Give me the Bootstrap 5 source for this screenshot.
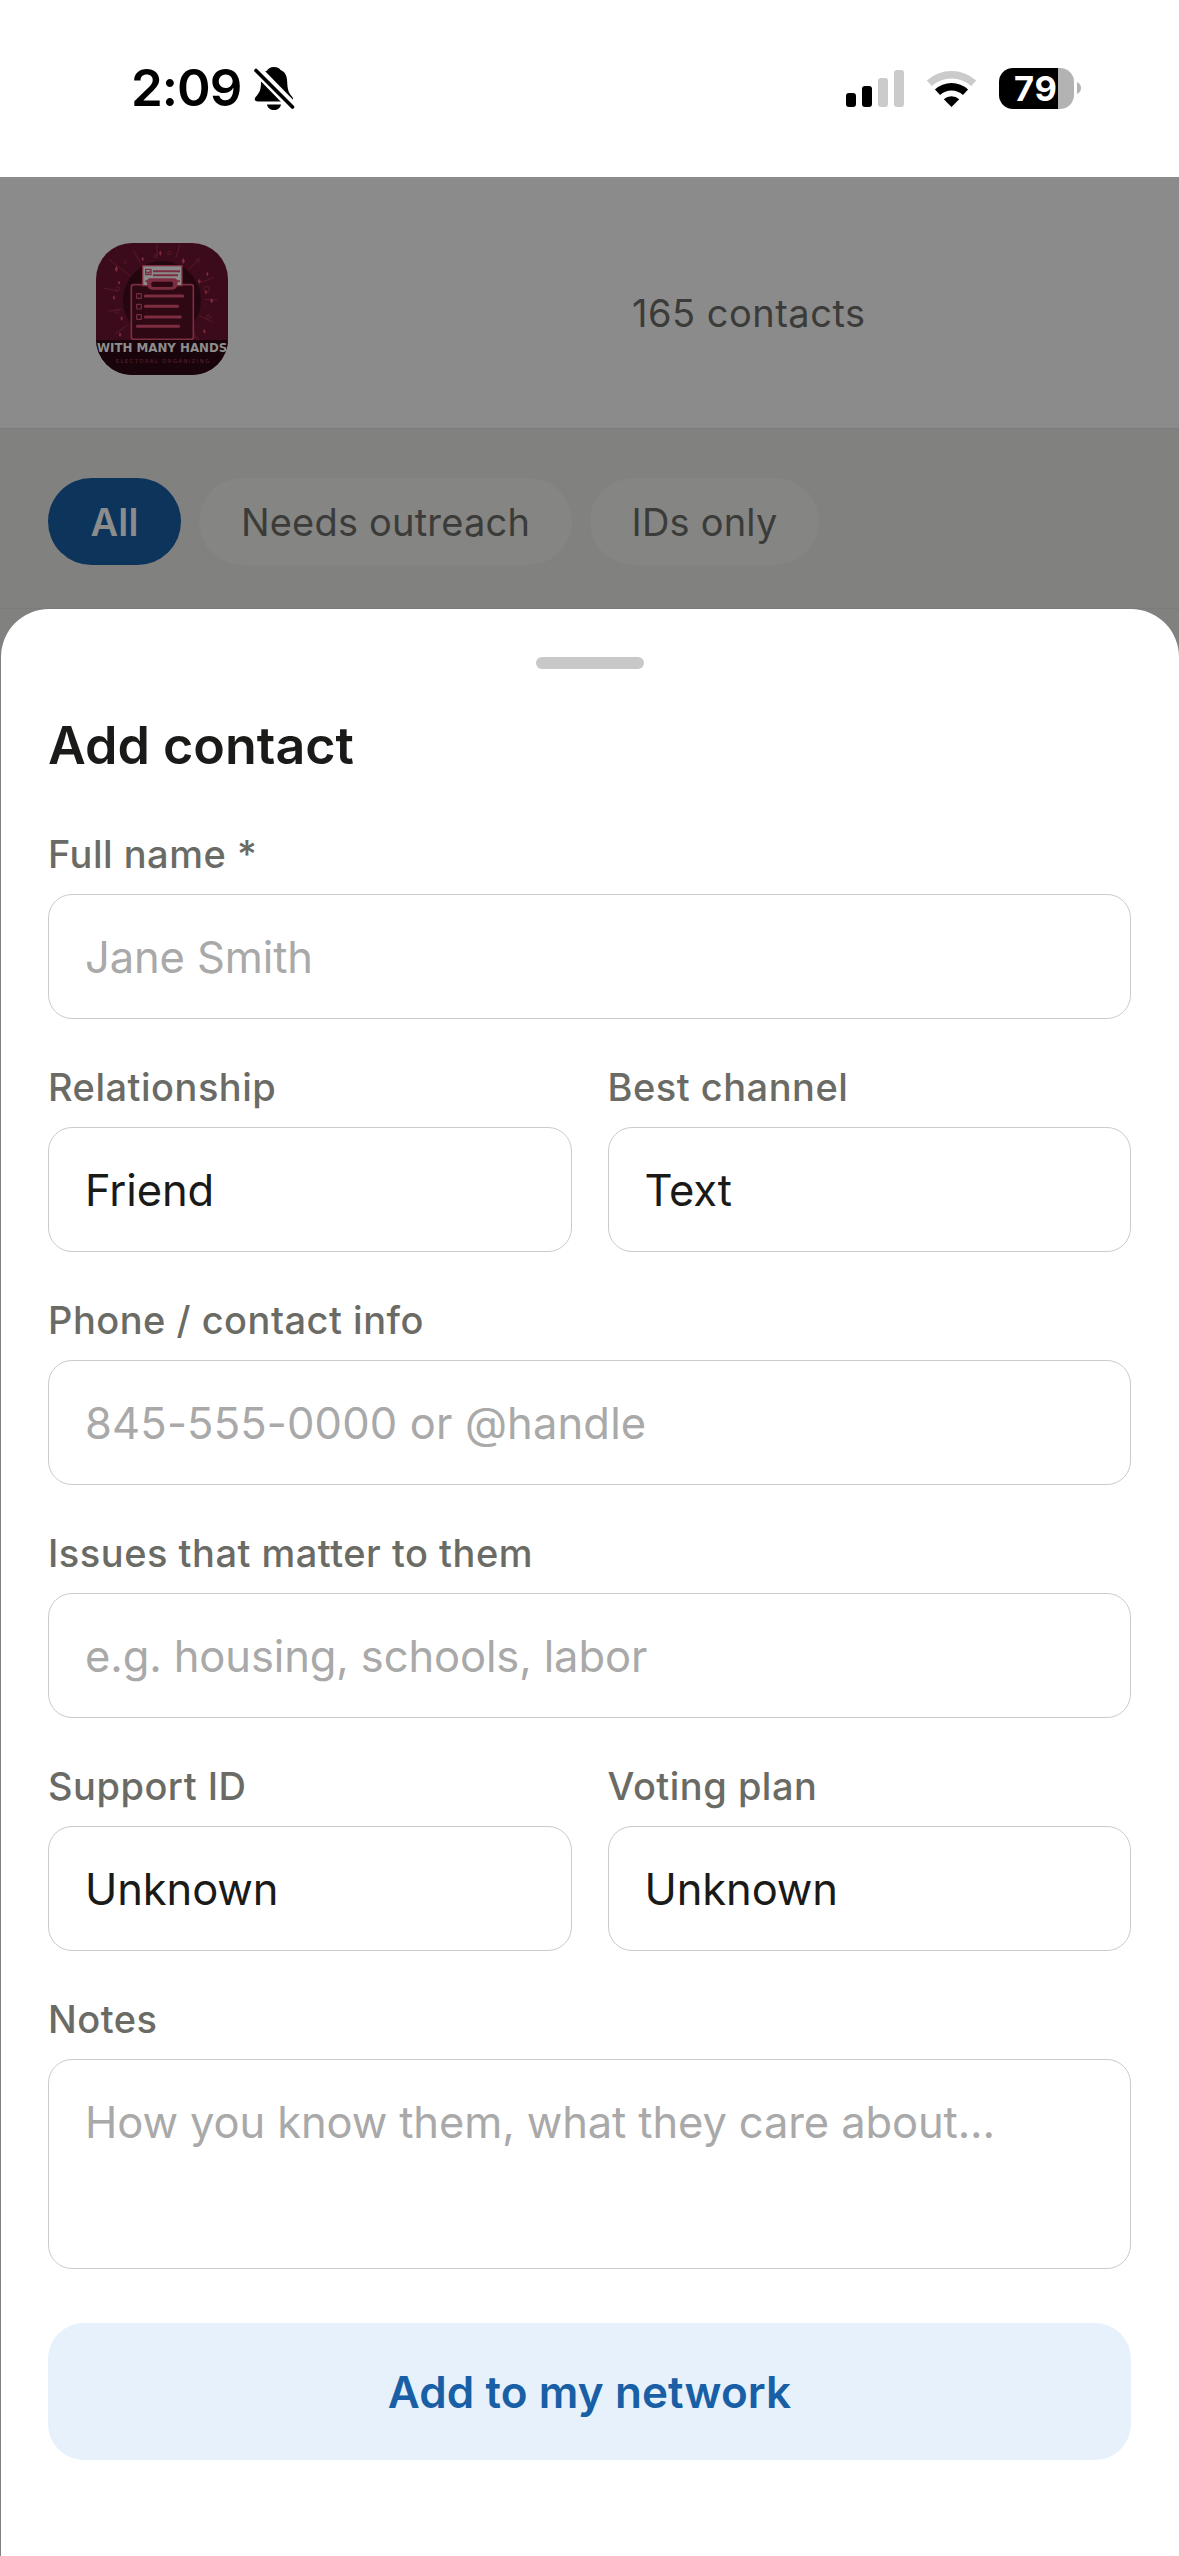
<!DOCTYPE html>
<html lang="en">
<head>
<meta charset="utf-8">
<meta name="viewport" content="width=device-width, initial-scale=1">
<title>Add contact</title>
<link href="https://cdn.jsdelivr.net/npm/bootstrap@5.3.0/dist/css/bootstrap.min.css" rel="stylesheet">
<style>
  body { font-family: Inter, "Liberation Sans", sans-serif; background: #81817f; color: #1a1a18; height: 2556px; overflow: hidden; }
  .status-bar { height: 177px; padding: 0 98px 0 131px; }
  .clock { font-size: 51px; font-weight: 600; line-height: 62px; margin-bottom: 2px; letter-spacing: -1px; width: 123px; }
  .status-icons { height: 44px; }
  .app-header { height: 252px; background: #8b8b8b; border-bottom: 1px solid #7b7b7b; padding: 13px 0 0 96px; color: #3b3b39; }
  .logo-img { width: 132px; height: 132px; }
  .contact-count { margin: 8px 0 0 404px; font-size: 38px; line-height: 48px; letter-spacing: .5px; }
  .filters { height: 180px; padding: 49px 48px 0; gap: 18px; border-bottom: 1px solid #7b7b7b; }
  .filter-pill { height: 87px; border-radius: 44px; background: #858583; color: #3b3b39; font-size: 38px; line-height: 48px; padding: 0; border: 0; letter-spacing: .2px; }
  .filter-pill.is-active { background: #0d355c; color: #8c8c8c; font-weight: 600; }
  .pill-a { width: 133px; } .pill-b { width: 373px; } .pill-c { width: 229px; }
  .sheet { margin-left: 1px; border-radius: 48px 48px 0 0; padding: 48px 48px 0 47px; }
  .grabber { width: 108px; height: 12px; border-radius: 6px; background: #c8c8c8; }
  .sheet-title { font-size: 52px; font-weight: 600; line-height: 64px; margin: 45px 0 52px; }
  .field { margin-bottom: 44px; }
  .field .form-label { display: block; font-size: 38px; font-weight: 500; line-height: 48px; margin: 0 0 16px; color: #6b6b66; letter-spacing: .5px; }
  .field .form-control { height: 125px; border: 1px solid #cbcbcb; border-radius: 24px; padding: 0 36px; font-size: 43.5px; line-height: 54px; letter-spacing: -.12px; color: #1a1a18; background: #fff; }
  .field .form-control::placeholder { color: #a9a9a9; opacity: 1; }
  .field .form-control[type=tel] { letter-spacing: .15px; }
  .field textarea.form-control { height: 210px; padding-top: 35px; resize: none; }
  .pair { gap: 36px; }
  .submit-btn { height: 137px; margin-top: 54px; border: 0; border-radius: 36px; background: #e6f1fb; color: #185fa5; font-size: 44px; font-weight: 600; letter-spacing: .1px; }
</style>
</head>
<body class="d-flex flex-column">
  <header class="status-bar bg-white d-flex align-items-center flex-shrink-0">
    <span class="clock text-black">2:09</span>
    <svg width="42" height="46" viewBox="0 0 42 46">
      <path d="M20 1c-4 0-6 2-6.800 3.500C7.500 7 7 12 7 16c0 7-1 10-4.500 14C-.5 33 .5 35.500 4 35.500h31c4.500 0 5-3 2.500-5.500C34 26 33.500 22 33.200 16 33 9 31 6 26.500 4 25.500 2 23 1 20 1zM13 38.500h14c-.5 3.500-3.500 5.500-7 5.500s-6.500-2-7-5.500z"/>
      <path d="M0 1 41 43" stroke="#fff" stroke-width="10"/>
      <path d="M2 4.500 38.500 41" stroke="#000" stroke-width="3.600" stroke-linecap="round"/>
    </svg>
    <div class="status-icons d-flex align-items-center ms-auto">
      <svg width="236" height="44" viewBox="845 66 236 44">
        <g><rect x="846" y="92" width="10" height="14" rx="3"/><rect x="862" y="85" width="10" height="21" rx="3"/></g>
        <g fill="#cbcbcb"><rect x="878" y="77" width="10" height="29" rx="3"/><rect x="894" y="69" width="10" height="37" rx="3"/></g>
        <g fill="none">
          <path d="M929.300 82.300a33 33 0 0 1 44.400 0" stroke="#cbcbcb" stroke-width="7.500"/>
          <path d="M937.500 91.300a20.500 20.500 0 0 1 28 0" stroke="#000" stroke-width="7.500"/>
        </g>
        <path d="M943.800 98.200a11.500 11.500 0 0 1 15.400 0L951.500 106z"/>
        <path d="M1013 67h45v41h-45a14 14 0 0 1-14-14V81a14 14 0 0 1 14-14z"/>
        <path d="M1058 67h2a14 14 0 0 1 14 14v13a14 14 0 0 1-14 14h-2z" fill="#b3b3b3"/>
        <path d="M1077 81q4 2 4 6t-4 6z" fill="#b3b3b3"/>
        <text x="1014" y="100" font-size="34.500" font-weight="700" fill="#fff" textLength="43">79</text>
      </svg>
    </div>
  </header>

  <nav class="app-header d-flex align-items-center flex-shrink-0">
    <svg class="logo-img" viewBox="48 39 396 396" role="img" aria-label="With Many Hands">
      <defs><clipPath id="tile"><rect x="48" y="39" width="396" height="396" rx="108"/></clipPath></defs>
      <g clip-path="url(#tile)">
        <rect x="48" y="39" width="396" height="396" fill="#3c0b1b"/>
        <g stroke="#571a29" stroke-width="3" fill="none">
          <path d="M160 62l22 36M230 40l2 40M300 44l-13 40M354 90l-32 32M402 142l-40 16M413 210l-38-2M398 276l-40-18M88 88l62 50M72 174l40 9M86 243l38-5M106 311l36-26M340 310l16 20M320 300l30 28"/>
          <circle cx="136" cy="97" r="4"/><circle cx="227" cy="78" r="5"/><circle cx="268" cy="69" r="5"/><circle cx="355" cy="91" r="5"/><circle cx="380" cy="177" r="8"/><circle cx="385" cy="261" r="6"/><circle cx="113" cy="176" r="6"/><circle cx="110" cy="245" r="6"/>
        </g>
        <g fill="#7c2b3c">
          <path d="M109 107l5 10-5 10-5-10zM241 62l4 8-4 8-4-8zM188 80l4 7-4 7-4-7zM310 84l5 9-5 9-5-9zM382 125l4 7-4 7-4-7zM395 204l5 8-5 8-5-8zM120 307l4 7-4 7-4-7zM373 297l4 7-4 7-4-7zM102 196l4 7-4 7-4-7zM125 258l4 7-4 7-4-7zM117 152l4 6-4 6-4-6zM378 181l4 6-4 6-4-6zM358 147l5 7-5 7-5-7z"/>
        </g>
        <circle cx="246" cy="210" r="117" fill="#230610"/>
        <rect x="154" y="164" width="186" height="164" rx="7" fill="#2e0914" stroke="#7d2d40" stroke-width="5"/>
        <rect x="188" y="107" width="118" height="60" fill="#8b8b8b" stroke="#7d2d40" stroke-width="4"/>
        <g fill="#7d2d40">
          <path d="M219 121h81v6h-81zM219 133h75v6h-75zM196 151h12v5h-12zM286 151h14v5h-14z"/>
          <path d="M211 145h70q12 0 12 12h0q0 22-16 22h-62q-14 0-14-22 0-12 10-12z"/>
        </g>
        <rect x="214" y="155" width="65" height="16" rx="5" fill="#2e0914"/>
        <path d="M197 118h16v16h-16zM200 125l5 5 9-9" fill="none" stroke="#7d2d40" stroke-width="4"/>
        <g fill="none" stroke="#7d2d40" stroke-width="3.500"><rect x="170" y="191" width="14" height="14" rx="2"/><rect x="170" y="223" width="14" height="14" rx="2"/><rect x="170" y="254" width="14" height="14" rx="2"/></g>
        <g stroke="#7d2d40" stroke-width="9" stroke-linecap="round"><path d="M196 198h112M196 229h97M196 261h105M172 289h124"/></g>
        <rect x="48" y="330" width="396" height="105" fill="#1a040b"/>
        <text x="51" y="367" font-family="DejaVu Sans, sans-serif" font-weight="700" font-size="35" fill="#8e8e8e" textLength="391" lengthAdjust="spacingAndGlyphs">WITH MANY HANDS</text>
        <text x="107" y="399" font-family="DejaVu Sans, sans-serif" font-size="16" fill="#5a2231" textLength="281">ELECTORAL ORGANIZING</text>
      </g>
    </svg>
    <span class="contact-count">165 contacts</span>
  </nav>

  <div class="filters d-flex align-items-start flex-shrink-0">
    <button class="filter-pill is-active pill-a">All</button>
    <button class="filter-pill pill-b">Needs outreach</button>
    <button class="filter-pill pill-c">IDs only</button>
  </div>

  <main class="sheet bg-white flex-grow-1">
    <div class="grabber mx-auto"></div>
    <h1 class="sheet-title">Add contact</h1>
    <form>
      <div class="field">
        <label class="form-label" for="fullName">Full name *</label>
        <input class="form-control" id="fullName" placeholder="Jane Smith">
      </div>
      <div class="pair d-flex">
        <div class="field flex-fill w-50">
          <label class="form-label" for="relationship">Relationship</label>
          <select class="form-control" id="relationship"><option>Friend</option></select>
        </div>
        <div class="field flex-fill w-50">
          <label class="form-label" for="channel">Best channel</label>
          <select class="form-control" id="channel"><option>Text</option></select>
        </div>
      </div>
      <div class="field">
        <label class="form-label" for="phone">Phone / contact info</label>
        <input class="form-control" type="tel" id="phone" placeholder="845-555-0000 or @handle">
      </div>
      <div class="field">
        <label class="form-label" for="issues">Issues that matter to them</label>
        <input class="form-control" id="issues" placeholder="e.g. housing, schools, labor">
      </div>
      <div class="pair d-flex">
        <div class="field flex-fill w-50">
          <label class="form-label" for="support">Support ID</label>
          <select class="form-control" id="support"><option>Unknown</option></select>
        </div>
        <div class="field flex-fill w-50">
          <label class="form-label" for="plan">Voting plan</label>
          <select class="form-control" id="plan"><option>Unknown</option></select>
        </div>
      </div>
      <div class="field mb-0">
        <label class="form-label" for="notes">Notes</label>
        <textarea class="form-control" id="notes" placeholder="How you know them, what they care about..."></textarea>
      </div>
      <button type="button" class="submit-btn w-100 d-block">Add to my network</button>
    </form>
  </main>
<script src="https://cdn.jsdelivr.net/npm/bootstrap@5.3.0/dist/js/bootstrap.bundle.min.js"></script>
</body>
</html>
